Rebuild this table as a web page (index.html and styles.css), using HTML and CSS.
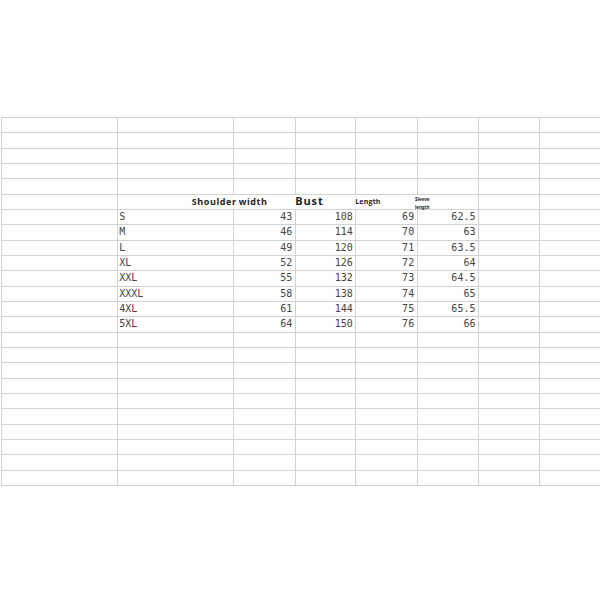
FILE: index.html
```html
<!DOCTYPE html>
<html>
<head>
<meta charset="utf-8">
<link rel="stylesheet" href="styles.css">
</head>
<body>
<div class="sheet">
  <div class="c"></div><div class="c"></div><div class="c"></div><div class="c"></div><div class="c"></div><div class="c"></div><div class="c"></div><div class="c"></div>
  <div class="c"></div><div class="c"></div><div class="c"></div><div class="c"></div><div class="c"></div><div class="c"></div><div class="c"></div><div class="c"></div>
  <div class="c"></div><div class="c"></div><div class="c"></div><div class="c"></div><div class="c"></div><div class="c"></div><div class="c"></div><div class="c"></div>
  <div class="c"></div><div class="c"></div><div class="c"></div><div class="c"></div><div class="c"></div><div class="c"></div><div class="c"></div><div class="c"></div>
  <div class="c"></div><div class="c"></div><div class="c"></div><div class="c"></div><div class="c"></div><div class="c"></div><div class="c"></div><div class="c"></div>

  <div class="c"></div>
  <div class="c head">
    <span class="h-shoulder">Shoulder width</span>
    <span class="h-bust">Bust</span>
    <span class="h-length">Length</span>
    <span class="h-sleeve"><span class="tiny">Sleeve<br>length</span></span>
  </div>
  <div class="c"></div><div class="c"></div>

  <div class="c"></div><div class="c s">S</div><div class="c n">43</div><div class="c n">108</div><div class="c n">69</div><div class="c n">62.5</div><div class="c"></div><div class="c"></div>
  <div class="c"></div><div class="c s">M</div><div class="c n">46</div><div class="c n">114</div><div class="c n">70</div><div class="c n">63</div><div class="c"></div><div class="c"></div>
  <div class="c"></div><div class="c s">L</div><div class="c n">49</div><div class="c n">120</div><div class="c n">71</div><div class="c n">63.5</div><div class="c"></div><div class="c"></div>
  <div class="c"></div><div class="c s">XL</div><div class="c n">52</div><div class="c n">126</div><div class="c n">72</div><div class="c n">64</div><div class="c"></div><div class="c"></div>
  <div class="c"></div><div class="c s">XXL</div><div class="c n">55</div><div class="c n">132</div><div class="c n">73</div><div class="c n">64.5</div><div class="c"></div><div class="c"></div>
  <div class="c"></div><div class="c s">XXXL</div><div class="c n">58</div><div class="c n">138</div><div class="c n">74</div><div class="c n">65</div><div class="c"></div><div class="c"></div>
  <div class="c"></div><div class="c s">4XL</div><div class="c n">61</div><div class="c n">144</div><div class="c n">75</div><div class="c n">65.5</div><div class="c"></div><div class="c"></div>
  <div class="c"></div><div class="c s">5XL</div><div class="c n">64</div><div class="c n">150</div><div class="c n">76</div><div class="c n">66</div><div class="c"></div><div class="c"></div>

  <div class="c"></div><div class="c"></div><div class="c"></div><div class="c"></div><div class="c"></div><div class="c"></div><div class="c"></div><div class="c"></div>
  <div class="c"></div><div class="c"></div><div class="c"></div><div class="c"></div><div class="c"></div><div class="c"></div><div class="c"></div><div class="c"></div>
  <div class="c"></div><div class="c"></div><div class="c"></div><div class="c"></div><div class="c"></div><div class="c"></div><div class="c"></div><div class="c"></div>
  <div class="c"></div><div class="c"></div><div class="c"></div><div class="c"></div><div class="c"></div><div class="c"></div><div class="c"></div><div class="c"></div>
  <div class="c"></div><div class="c"></div><div class="c"></div><div class="c"></div><div class="c"></div><div class="c"></div><div class="c"></div><div class="c"></div>
  <div class="c"></div><div class="c"></div><div class="c"></div><div class="c"></div><div class="c"></div><div class="c"></div><div class="c"></div><div class="c"></div>
  <div class="c"></div><div class="c"></div><div class="c"></div><div class="c"></div><div class="c"></div><div class="c"></div><div class="c"></div><div class="c"></div>
  <div class="c"></div><div class="c"></div><div class="c"></div><div class="c"></div><div class="c"></div><div class="c"></div><div class="c"></div><div class="c"></div>
  <div class="c"></div><div class="c"></div><div class="c"></div><div class="c"></div><div class="c"></div><div class="c"></div><div class="c"></div><div class="c"></div>
  <div class="c"></div><div class="c"></div><div class="c"></div><div class="c"></div><div class="c"></div><div class="c"></div><div class="c"></div><div class="c"></div>
</div>
</body>
</html>
```

FILE: styles.css
```css
html, body {
  margin: 0;
  padding: 0;
  background: #ffffff;
  overflow: hidden;
  width: 600px;
  height: 600px;
}

.sheet {
  margin-top: 117px;
  margin-left: 1px;
  width: 602px;
  display: grid;
  grid-template-columns: 115.7px 116.6px 61.4px 60.6px 61.4px 61.3px 61.3px 61.3px;
  grid-auto-rows: 15.333px;
  border-top: 1px solid #d2d2d2;
  border-left: 1px solid #d2d2d2;
  font-family: "DejaVu Sans Mono", "Liberation Mono", monospace;
  font-size: 10px;
  color: #444444;
}

.c {
  box-sizing: border-box;
  border-right: 1px solid #d2d2d2;
  border-bottom: 1px solid #d2d2d2;
  line-height: 14.33px;
  white-space: nowrap;
  overflow: visible;
}

.s {
  padding-left: 1.5px;
}

.n {
  text-align: right;
  padding-right: 2.5px;
}

.head {
  grid-column: span 5;
  display: flex;
  align-items: baseline;
  padding-left: 74px;
  font-family: "Open Sans", "Liberation Sans", sans-serif;
  font-weight: 700;
  color: #222222;
  line-height: 11px;
}

.h-shoulder {
  width: 103.5px;
  font-size: 9px;
  letter-spacing: 0.6px;
  word-spacing: -1px;
}

.h-bust {
  width: 60px;
  font-size: 11px;
  letter-spacing: 0.9px;
}

.h-length {
  width: 60px;
  font-size: 7px;
  letter-spacing: 0.2px;
  position: relative;
  top: -1px;
}

.h-sleeve {
  align-self: flex-start;
  width: 40px;
  height: 14px;
}

.tiny {
  display: block;
  font-size: 9px;
  line-height: 16px;
  transform: scale(0.5);
  transform-origin: 0 0;
}
```
